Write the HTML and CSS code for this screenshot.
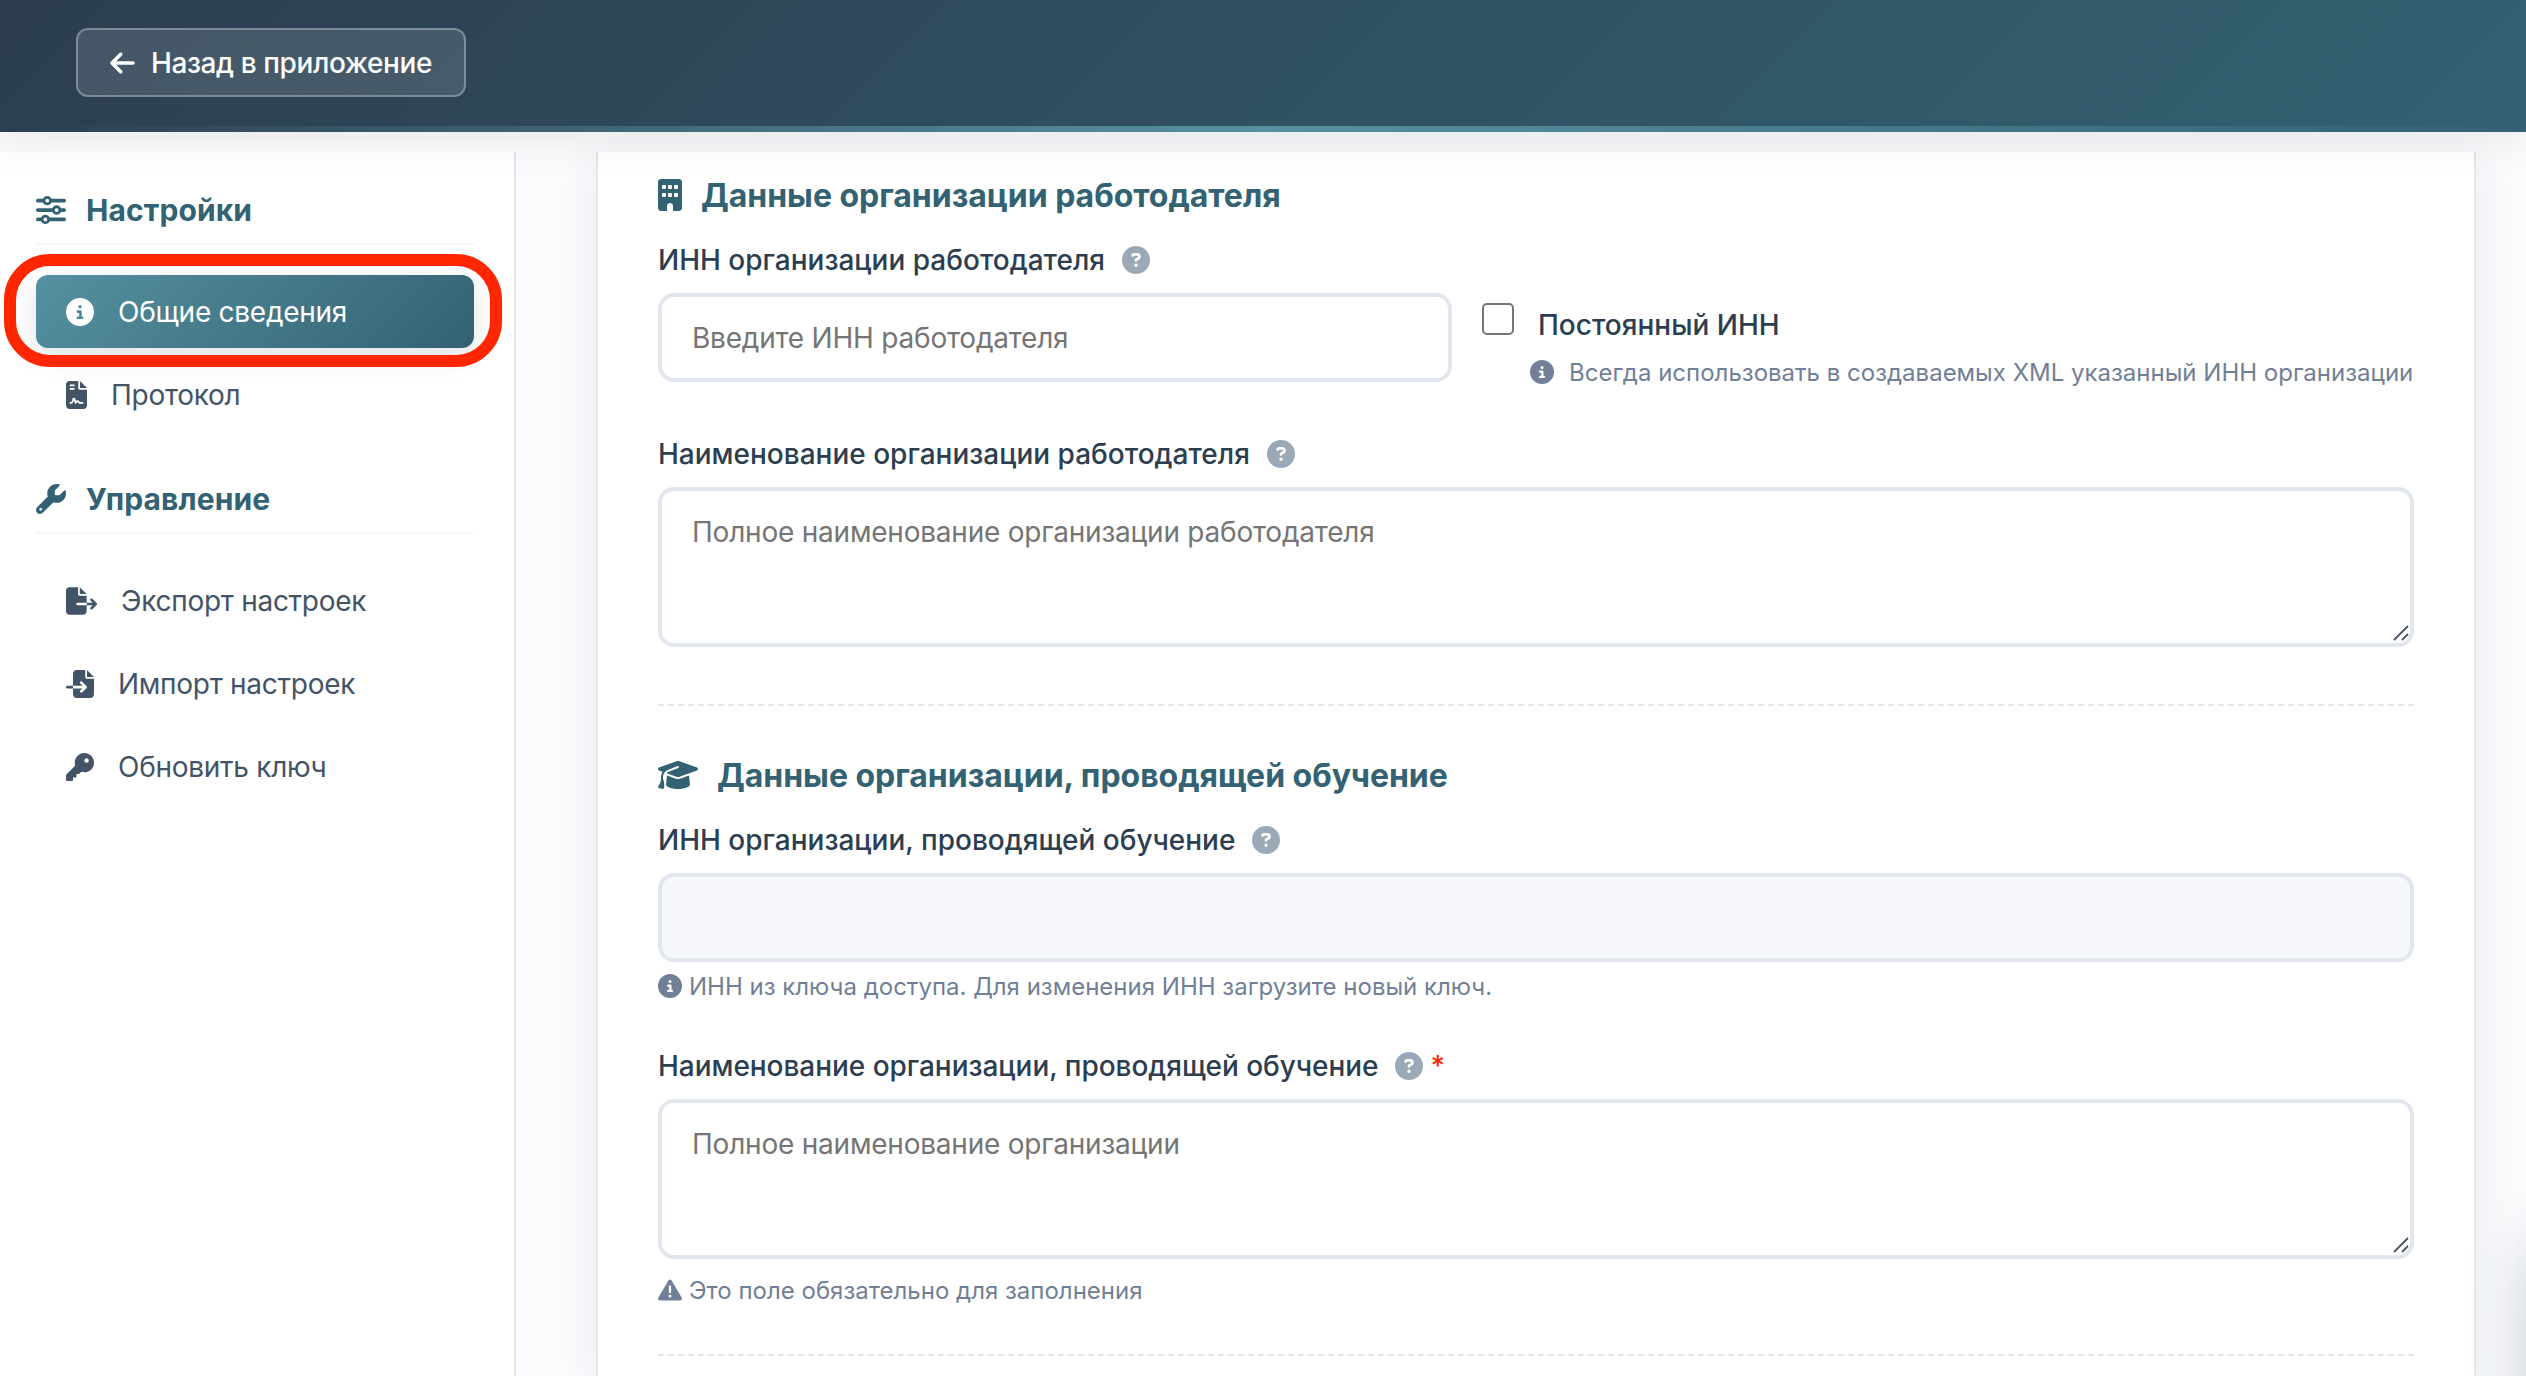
FILE: index.html
```html
<!DOCTYPE html>
<html lang="ru">
<head>
    <meta charset="UTF-8">
    <meta name="viewport" content="width=device-width, initial-scale=1.0">
    <title>Настройки</title>
    <link rel="stylesheet" href="styles.css">
</head>
<body>
    <svg class="sprite">
        <symbol id="arrow-left" viewBox="0 0 448 512"><path d="M9.4 233.4c-12.5 12.5-12.5 32.8 0 45.3l160 160c12.5 12.5 32.8 12.5 45.3 0s12.5-32.8 0-45.3L109.2 288 416 288c17.7 0 32-14.3 32-32s-14.3-32-32-32l-306.7 0L214.6 118.6c12.5-12.5 12.5-32.8 0-45.3s-32.8-12.5-45.3 0l-160 160z"/></symbol>
        <symbol id="circle-info" viewBox="0 0 512 512"><path d="M256 512A256 256 0 1 0 256 0a256 256 0 1 0 0 512zM216 336h24V272H216c-13.3 0-24-10.7-24-24s10.7-24 24-24h48c13.3 0 24 10.7 24 24v88h8c13.3 0 24 10.7 24 24s-10.7 24-24 24H216c-13.3 0-24-10.7-24-24s10.7-24 24-24zm40-208a32 32 0 1 1 0 64 32 32 0 1 1 0-64z"/></symbol>
        <symbol id="circle-question" viewBox="0 0 512 512"><path d="M256 512A256 256 0 1 0 256 0a256 256 0 1 0 0 512zM169.8 165.3c7.9-22.3 29.1-37.3 52.8-37.3h58.3c34.9 0 63.1 28.3 63.1 63.1c0 22.6-12.1 43.5-31.7 54.8L280 264.4c-.2 13-10.9 23.6-24 23.6c-13.3 0-24-10.7-24-24V250.5c0-8.6 4.6-16.5 12.1-20.8l44.3-25.4c4.7-2.7 7.6-7.7 7.6-13.1c0-8.4-6.8-15.1-15.1-15.1H222.6c-3.4 0-6.4 2.1-7.5 5.3l-.4 1.2c-4.4 12.5-18.2 19-30.6 14.6s-19-18.2-14.6-30.6l.4-1.2zM224 352a32 32 0 1 1 64 0 32 32 0 1 1 -64 0z"/></symbol>
        <symbol id="sliders" viewBox="0 0 512 512"><path d="M0 416c0 17.7 14.3 32 32 32l54.7 0c12.3 28.3 40.5 48 73.3 48s61-19.7 73.3-48L480 448c17.7 0 32-14.3 32-32s-14.3-32-32-32l-246.7 0c-12.3-28.3-40.5-48-73.3-48s-61 19.7-73.3 48L32 384c-17.7 0-32 14.3-32 32zm128 0a32 32 0 1 1 64 0 32 32 0 1 1 -64 0zM320 256a32 32 0 1 1 64 0 32 32 0 1 1 -64 0zm32-80c-32.8 0-61 19.7-73.3 48L32 224c-17.7 0-32 14.3-32 32s14.3 32 32 32l246.7 0c12.3 28.3 40.5 48 73.3 48s61-19.7 73.3-48l54.7 0c17.7 0 32-14.3 32-32s-14.3-32-32-32l-54.7 0c-12.3-28.3-40.5-48-73.3-48zM192 128a32 32 0 1 1 0-64 32 32 0 1 1 0 64zm73.3-64C253 35.7 224.8 16 192 16s-61 19.7-73.3 48L32 64C14.3 64 0 78.3 0 96s14.3 32 32 32l86.7 0c12.3 28.3 40.5 48 73.3 48s61-19.7 73.3-48L480 128c17.7 0 32-14.3 32-32s-14.3-32-32-32L265.3 64z"/></symbol>
        <symbol id="wrench" viewBox="0 0 512 512"><path d="M352 320c88.4 0 160-71.6 160-160c0-15.3-2.2-30.1-6.2-44.2c-3.1-10.8-16.4-13.2-24.3-5.3l-76.8 76.8c-3 3-7.1 4.7-11.3 4.7H336c-8.8 0-16-7.2-16-16V118.6c0-4.2 1.7-8.3 4.7-11.3l76.8-76.8c7.9-7.9 5.4-21.2-5.3-24.3C382.1 2.2 367.3 0 352 0C263.6 0 192 71.6 192 160c0 19.1 3.4 37.5 9.5 54.5L19.9 396.1C7.2 408.8 0 426.1 0 444.1C0 481.6 30.4 512 67.9 512c18 0 35.3-7.2 48-19.9L297.5 310.5c17 6.2 35.4 9.5 54.5 9.5zM80 408a24 24 0 1 1 0 48 24 24 0 1 1 0-48z"/></symbol>
        <symbol id="file-contract" viewBox="0 0 384 512"><path d="M64 0C28.7 0 0 28.7 0 64V448c0 35.3 28.7 64 64 64H320c35.3 0 64-28.7 64-64V160H256c-17.7 0-32-14.3-32-32V0H64zM256 0V128H384L256 0zM80 64h64c8.8 0 16 7.2 16 16s-7.2 16-16 16H80c-8.8 0-16-7.2-16-16s7.2-16 16-16zm0 64h64c8.8 0 16 7.2 16 16s-7.2 16-16 16H80c-8.8 0-16-7.2-16-16s7.2-16 16-16zm54.2 253.8c-6.1 20.3-24.8 34.2-46 34.2H80c-8.8 0-16-7.2-16-16s7.2-16 16-16h8.2c7.1 0 13.3-4.6 15.3-11.4l14.9-49.5c3.4-11.3 13.8-19.1 25.6-19.1s22.2 7.7 25.6 19.1l11.6 38.6c7.4-6.2 16.8-9.7 26.8-9.7c15.9 0 30.4 9 37.5 23.2l4.4 8.8H304c8.8 0 16 7.2 16 16s-7.2 16-16 16H240c-6.1 0-11.6-3.4-14.3-8.8l-8.8-17.7c-1.7-3.4-5.1-5.5-8.8-5.5s-7.2 2.1-8.8 5.5l-8.8 17.7c-2.9 5.9-9.2 9.4-15.7 8.8s-12.1-5.1-13.9-11.3L144 349l-9.8 32.8z"/></symbol>
        <symbol id="file-export" viewBox="0 0 576 512"><path d="M0 64C0 28.7 28.7 0 64 0L224 0l0 128c0 17.7 14.3 32 32 32l128 0 0 128-168 0c-13.3 0-24 10.7-24 24s10.7 24 24 24l168 0 0 112c0 35.3-28.7 64-64 64L64 512c-35.3 0-64-28.7-64-64L0 64zM384 336l0-48 110.1 0-39-39c-9.4-9.4-9.4-24.6 0-33.9s24.6-9.4 33.9 0l80 80c9.4 9.4 9.4 24.6 0 33.9l-80 80c-9.4 9.4-24.6 9.4-33.9 0s-9.4-24.6 0-33.9l39-39L384 336zm0-208l-128 0L256 0 384 128z"/></symbol>
        <symbol id="file-import" viewBox="0 0 512 512"><path d="M128 64c0-35.3 28.7-64 64-64L352 0l0 128c0 17.7 14.3 32 32 32l128 0 0 288c0 35.3-28.7 64-64 64l-256 0c-35.3 0-64-28.7-64-64l0-112 174.1 0-39 39c-9.4 9.4-9.4 24.6 0 33.9s24.6 9.4 33.9 0l80-80c9.4-9.4 9.4-24.6 0-33.9l-80-80c-9.4-9.4-24.6-9.4-33.9 0s-9.4 24.6 0 33.9l39 39L128 288l0-224zm0 224l0 48L24 336c-13.3 0-24-10.7-24-24s10.7-24 24-24l104 0zM512 128l-128 0L384 0 512 128z"/></symbol>
        <symbol id="key" viewBox="0 0 512 512"><path d="M336 352c97.2 0 176-78.8 176-176S433.2 0 336 0S160 78.8 160 176c0 18.7 2.9 36.8 8.3 53.7L7 391c-4.5 4.5-7 10.6-7 17v80c0 13.3 10.7 24 24 24h80c13.3 0 24-10.7 24-24V448h40c13.3 0 24-10.7 24-24V384h40c6.4 0 12.5-2.5 17-7l33.3-33.3c16.9 5.4 35 8.3 53.7 8.3zM376 96a40 40 0 1 1 0 80 40 40 0 1 1 0-80z"/></symbol>
        <symbol id="building" viewBox="0 0 384 512"><path d="M48 0C21.5 0 0 21.5 0 48V464c0 26.5 21.5 48 48 48h96V432c0-26.5 21.5-48 48-48s48 21.5 48 48v80h96c26.5 0 48-21.5 48-48V48c0-26.5-21.5-48-48-48H48zM64 240c0-8.8 7.2-16 16-16h32c8.8 0 16 7.2 16 16v32c0 8.8-7.2 16-16 16H80c-8.8 0-16-7.2-16-16V240zm112-16h32c8.8 0 16 7.2 16 16v32c0 8.8-7.2 16-16 16H176c-8.8 0-16-7.2-16-16V240c0-8.8 7.2-16 16-16zm80 16c0-8.8 7.2-16 16-16h32c8.8 0 16 7.2 16 16v32c0 8.8-7.2 16-16 16H272c-8.8 0-16-7.2-16-16V240zM80 96h32c8.8 0 16 7.2 16 16v32c0 8.8-7.2 16-16 16H80c-8.8 0-16-7.2-16-16V112c0-8.8 7.2-16 16-16zm80 16c0-8.8 7.2-16 16-16h32c8.8 0 16 7.2 16 16v32c0 8.8-7.2 16-16 16H176c-8.8 0-16-7.2-16-16V112zM272 96h32c8.8 0 16 7.2 16 16v32c0 8.8-7.2 16-16 16H272c-8.8 0-16-7.2-16-16V112c0-8.8 7.2-16 16-16z"/></symbol>
        <symbol id="graduation-cap" viewBox="0 0 640 512"><path d="M320 32c-8.1 0-16.1 1.4-23.7 4.1L15.8 137.4C6.3 140.9 0 149.9 0 160s6.3 19.1 15.8 22.6l57.9 20.9C57.3 229.3 48 259.8 48 291.9v28.1c0 28.4-10.8 57.7-22.3 80.8c-6.5 13-13.9 25.8-22.5 37.6C0 442.7-.9 448.3 .9 453.4s6 8.9 11.2 10.2l64 16c4.2 1.1 8.7 .3 12.4-2s6.3-6.1 7.1-10.4c8.6-42.8 4.3-81.2-2.1-108.7C90.3 344.3 86 329.8 80 316.5V291.9c0-30.2 10.2-58.7 27.9-81.5c12.9-15.5 29.6-28 49.2-35.7l157-61.7c8.2-3.2 17.5 .8 20.7 9s-.8 17.5-9 20.7l-157 61.7c-12.4 4.9-23.3 12.4-32.2 21.6l159.6 57.6c7.6 2.7 15.6 4.1 23.7 4.1s16.1-1.4 23.7-4.1L624.2 182.6c9.5-3.4 15.8-12.5 15.8-22.6s-6.3-19.1-15.8-22.6L343.7 36.1C336.1 33.4 328.1 32 320 32zM128 408c0 35.3 86 72 192 72s192-36.7 192-72L496.7 262.6 354.5 314c-11.1 4-22.8 6-34.5 6s-23.5-2-34.5-6L143.3 262.6 128 408z"/></symbol>
        <symbol id="triangle" viewBox="0 0 512 512"><path d="M256 32c14.2 0 27.3 7.5 34.5 19.8l216 368c7.3 12.4 7.3 27.7 .2 40.1S486.3 480 472 480H40c-14.3 0-27.6-7.7-34.7-20.1s-7-27.8 .2-40.1l216-368C228.7 39.5 241.8 32 256 32zm0 128c-13.3 0-24 10.7-24 24V296c0 13.3 10.7 24 24 24s24-10.7 24-24V184c0-13.3-10.7-24-24-24zm32 224a32 32 0 1 0 -64 0 32 32 0 1 0 64 0z"/></symbol>
        <symbol id="grip" viewBox="0 0 16 16"><path d="M1 15L15 1M9 15l6-6" fill="none" stroke="#4a5568" stroke-width="1.8"/></symbol>
    </svg>

    <header class="header">
        <a class="back_btn" href="#">
            <svg class="icon"><use href="#arrow-left"/></svg>
            <span>Назад в приложение</span>
        </a>
    </header>

    <div class="container">
        <aside class="sidebar">
            <h3 class="menu_title"><svg class="icon"><use href="#sliders"/></svg>Настройки</h3>
            <ul class="menu">
                <li class="active"><svg class="icon"><use href="#circle-info"/></svg>Общие сведения</li>
                <li><svg class="icon narrow"><use href="#file-contract"/></svg>Протокол</li>
            </ul>
            <h3 class="menu_title"><svg class="icon"><use href="#wrench"/></svg>Управление</h3>
            <ul class="menu">
                <li><svg class="icon wide"><use href="#file-export"/></svg>Экспорт настроек</li>
                <li><svg class="icon"><use href="#file-import"/></svg>Импорт настроек</li>
                <li><svg class="icon"><use href="#key"/></svg>Обновить ключ</li>
            </ul>
        </aside>

        <main class="content">
            <section class="section">
                <h2><svg class="icon narrow"><use href="#building"/></svg>Данные организации работодателя</h2>
                <div class="inn_row">
                    <div class="inn_field">
                        <label class="label" for="inn">ИНН организации работодателя<svg class="icon hint"><use href="#circle-question"/></svg></label>
                        <input class="field" id="inn" type="text" placeholder="Введите ИНН работодателя">
                    </div>
                    <div class="inn_const">
                        <div class="check_row">
                            <input class="check" id="const" type="checkbox">
                            <label class="check_label" for="const">Постоянный ИНН</label>
                        </div>
                        <p class="help check_help"><svg class="icon"><use href="#circle-info"/></svg>Всегда использовать в создаваемых XML указанный ИНН организации</p>
                    </div>
                </div>
                <label class="label" for="name">Наименование организации работодателя<svg class="icon hint"><use href="#circle-question"/></svg></label>
                <div class="area">
                    <textarea class="field" id="name" placeholder="Полное наименование организации работодателя"></textarea>
                    <svg class="grip"><use href="#grip"/></svg>
                </div>
            </section>

            <section class="section">
                <h2><svg class="icon wide"><use href="#graduation-cap"/></svg>Данные организации, проводящей обучение</h2>
                <label class="label" for="edu_inn">ИНН организации, проводящей обучение<svg class="icon hint"><use href="#circle-question"/></svg></label>
                <input class="field" id="edu_inn" type="text" disabled>
                <p class="help"><svg class="icon"><use href="#circle-info"/></svg>ИНН из ключа доступа. Для изменения ИНН загрузите новый ключ.</p>
                <label class="label edu_name" for="edu_name">Наименование организации, проводящей обучение<svg class="icon hint"><use href="#circle-question"/></svg><span class="required">*</span></label>
                <div class="area">
                    <textarea class="field" id="edu_name" placeholder="Полное наименование организации"></textarea>
                    <svg class="grip"><use href="#grip"/></svg>
                </div>
                <p class="help area_help"><svg class="icon"><use href="#triangle"/></svg>Это поле обязательно для заполнения</p>
            </section>
        </main>
    </div>

    <div class="side_panel"></div>
</body>
</html>
```

FILE: styles.css
```css
*,
*::before,
*::after{
    padding: 0;
    margin: 0;
    box-sizing: border-box;
}

body{
    height: 100vh;
    overflow: hidden;
    display: flex;
    flex-direction: column;
    font-family: Inter, "Liberation Sans", sans-serif;
    font-size: 28px;
    color: #2c3e50;
    background: #fafbfd;
}

.sprite{
    display: none;
}

.icon{
    width: 28px;
    height: 28px;
    flex: none;
    fill: currentColor;
}

.header{
    position: relative;
    z-index: 2;
    height: 132px;
    flex: none;
    padding: 28px 76px;
    background: linear-gradient(135deg, #2c3e50 0%, #336272 100%);
    box-shadow: 0 8px 40px rgba(0, 0, 0, 0.08);
}

.header::after{
    content: '';
    position: absolute;
    left: 0;
    right: 0;
    bottom: 0;
    height: 6px;
    background: linear-gradient(90deg, #2c3e50, #5591a0 50%, #336272);
}

.back_btn{
    display: inline-flex;
    align-items: center;
    gap: 16px;
    width: 390px;
    height: 69px;
    padding: 0 31px 0 32px;
    border: 2px solid rgba(255, 255, 255, 0.3);
    border-radius: 12px;
    background: rgba(255, 255, 255, 0.12);
    color: #fff;
    font-weight: 500;
    letter-spacing: -0.4px;
    text-decoration: none;
    white-space: nowrap;
}

.back_btn .icon{
    width: 25px;
}

.container{
    display: flex;
    flex: 1;
    margin-top: 20px;
    min-height: 0;
}

/* sidebar */

.sidebar{
    width: 516px;
    flex: none;
    padding: 23px 40px 0 36px;
    background: #fff;
    border-right: 2px solid #e1e6ef;
}

.menu_title{
    display: flex;
    align-items: center;
    gap: 20px;
    height: 70px;
    padding-top: 1px;
    margin-bottom: 30px;
    border-bottom: 2px solid #f5f6fa;
    font-size: 30px;
    font-weight: 700;
    letter-spacing: 0.1px;
    color: #336272;
}

.menu_title .icon{
    width: 30px;
    height: 30px;
}

.menu{
    list-style: none;
    margin-bottom: 33px;
}

.menu li{
    display: flex;
    align-items: center;
    gap: 24px;
    height: 73px;
    padding-left: 30px;
    margin-bottom: 10px;
    border-radius: 12px;
    color: #435466;
    letter-spacing: -0.27px;
}

.menu li.active{
    position: relative;
    color: #fff;
    background: linear-gradient(135deg, #5591a0, #336272);
    box-shadow: 0 8px 24px rgba(44, 62, 80, 0.15);
}

.menu li.active::after{
    content: '';
    position: absolute;
    left: -32px;
    top: -21px;
    width: 498px;
    height: 113px;
    border: 12px solid #ff2600;
    border-radius: 46px;
}

.menu .narrow{
    width: 21px;
}

.menu .wide{
    width: 31px;
}

/* form */

.content{
    flex: 1;
    margin: 0 50px 0 80px;
    padding: 23px 60px 0;
    background: #fff;
    border-left: 2px solid #e1e6ef;
    border-right: 2px solid #e1e6ef;
    box-shadow: 0 8px 40px rgba(44, 62, 80, 0.08);
}

.section{
    padding-bottom: 57px;
    border-bottom: 2px dashed #e1e6ef;
    margin-bottom: 49px;
}

.section h2{
    display: flex;
    align-items: center;
    gap: 19px;
    height: 40px;
    margin-bottom: 25px;
    font-size: 32px;
    font-weight: 700;
    letter-spacing: -0.02px;
    color: #336272;
}

h2 .icon{
    height: 32px;
}

h2 .narrow{
    width: 24px;
}

h2 .wide{
    width: 40px;
}

.inn_row{
    display: flex;
    gap: 30px;
    height: 142px;
    margin-bottom: 52px;
}

.inn_field{
    width: 794px;
}

.inn_const{
    flex: 1;
    padding-top: 63px;
}

.label{
    display: flex;
    align-items: center;
    height: 40px;
    margin-bottom: 13px;
    font-weight: 500;
}

.hint{
    margin-left: 17px;
    color: #9ba8b5;
}

.required{
    margin-left: 7px;
    color: #ff2600;
}

.field{
    display: block;
    width: 100%;
    height: 89px;
    padding: 0 30px;
    border: 4px solid #e1e6ef;
    border-radius: 16px;
    background: #fff;
    font: inherit;
    letter-spacing: -0.22px;
}

.field:disabled{
    background: #f5f7fb;
}

.field::placeholder{
    color: #757575;
}

textarea.field{
    height: 160px;
    padding-top: 24px;
    resize: none;
}

.area{
    position: relative;
}

.grip{
    position: absolute;
    right: 5px;
    bottom: 6px;
    width: 16px;
    height: 16px;
}

.check_row{
    display: flex;
    gap: 24px;
}

.check{
    appearance: none;
    width: 32px;
    height: 32px;
    border: 2px solid #767676;
    border-radius: 5px;
    background: #fff;
}

.check_label{
    margin-top: 5px;
    line-height: 34px;
    font-weight: 500;
}

.help{
    display: flex;
    align-items: center;
    gap: 7px;
    height: 24px;
    margin-top: 12px;
    font-size: 24px;
    white-space: nowrap;
    color: #718096;
}

.help .icon{
    width: 24px;
    height: 24px;
}

.check_help{
    gap: 15px;
    margin: 18px 0 0 48px;
}

.edu_name{
    margin-top: 48px;
    letter-spacing: -0.04px;
}

.area_help{
    margin-top: 19px;
    margin-bottom: -5px;
}

.side_panel{
    position: fixed;
    z-index: 3;
    left: 2530px;
    top: 1228px;
    width: 600px;
    height: 600px;
    border-radius: 24px;
    box-shadow: 0 16px 64px rgba(44, 62, 80, 0.25);
}
```
